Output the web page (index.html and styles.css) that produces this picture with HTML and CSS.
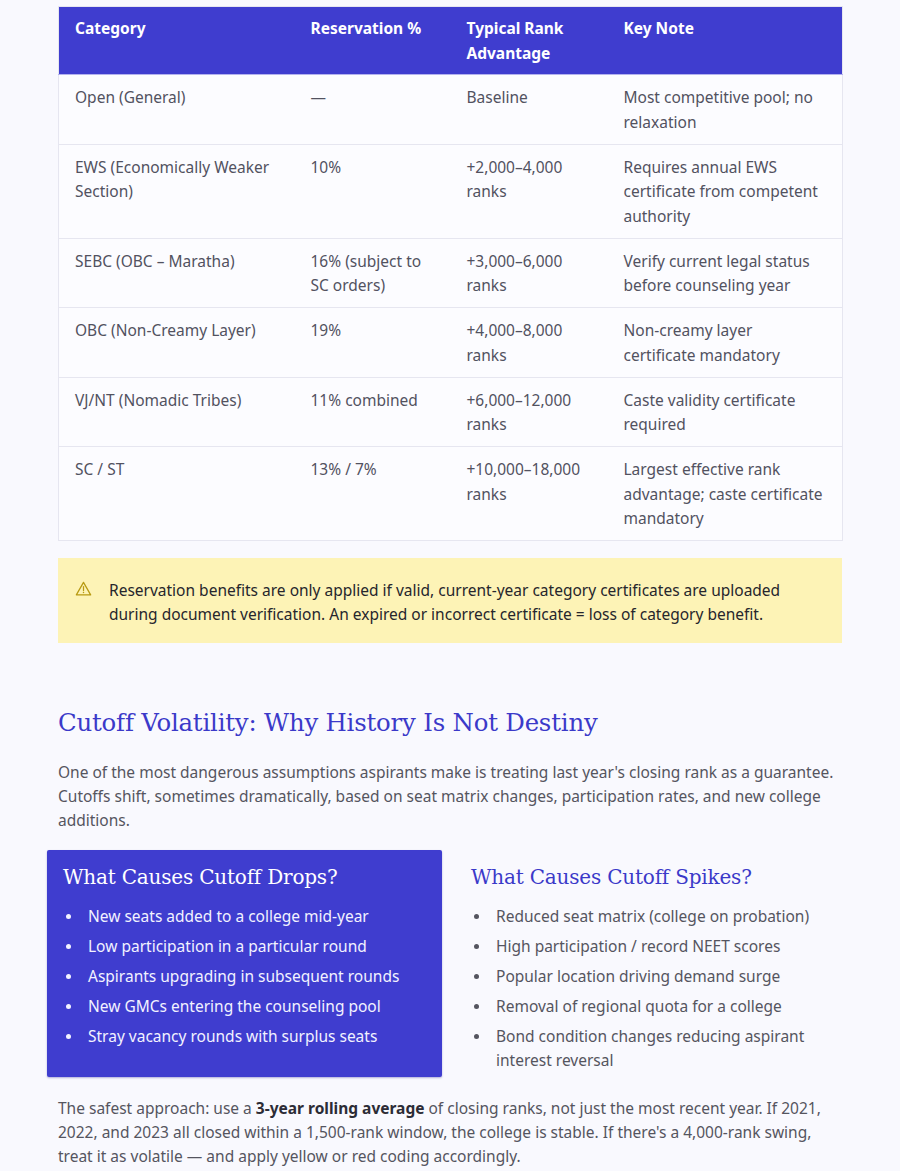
FILE: index.html
```html
<!DOCTYPE html>
<html lang="en">
<head>
<meta charset="utf-8">
<title>Category Reservation and Cutoff Volatility</title>
<link rel="stylesheet" href="styles.css">
</head>
<body>
<main class="page">
  <table class="res-table">
    <colgroup>
      <col class="c1"><col class="c2"><col class="c3"><col class="c4">
    </colgroup>
    <thead>
      <tr><th>Category</th><th>Reservation %</th><th>Typical Rank Advantage</th><th>Key Note</th></tr>
    </thead>
    <tbody>
      <tr><td>Open (General)</td><td>—</td><td>Baseline</td><td>Most competitive pool; no relaxation</td></tr>
      <tr><td>EWS (Economically Weaker Section)</td><td>10%</td><td>+2,000–4,000 ranks</td><td>Requires annual EWS certificate from competent authority</td></tr>
      <tr><td>SEBC (OBC – Maratha)</td><td>16% (subject to SC orders)</td><td>+3,000–6,000 ranks</td><td>Verify current legal status before counseling year</td></tr>
      <tr><td>OBC (Non-Creamy Layer)</td><td>19%</td><td>+4,000–8,000 ranks</td><td>Non-creamy layer certificate mandatory</td></tr>
      <tr><td>VJ/NT (Nomadic Tribes)</td><td>11% combined</td><td>+6,000–12,000 ranks</td><td>Caste validity certificate required</td></tr>
      <tr><td>SC / ST</td><td>13% / 7%</td><td>+10,000–18,000 ranks</td><td>Largest effective rank advantage; caste certificate mandatory</td></tr>
    </tbody>
  </table>

  <div class="warning">
    <svg class="warn-icon" viewBox="0 0 20 18" width="17" height="15" aria-hidden="true">
      <path d="M10 1.6 L18.6 16.6 H1.4 Z" fill="none" stroke="#b89a12" stroke-width="1.5" stroke-linejoin="round"/>
      <path d="M10 6.6 V11.4" stroke="#b89a12" stroke-width="1.5" stroke-linecap="round"/>
      <circle cx="10" cy="13.9" r="0.9" fill="#b89a12"/>
    </svg>
    <p>Reservation benefits are only applied if valid, current-year category certificates are uploaded during document verification. An expired or incorrect certificate = loss of category benefit.</p>
  </div>

  <h2 class="section-title">Cutoff Volatility: Why History Is Not Destiny</h2>
  <p class="body-text">One of the most dangerous assumptions aspirants make is treating last year's closing rank as a guarantee. Cutoffs shift, sometimes dramatically, based on seat matrix changes, participation rates, and new college additions.</p>

  <div class="compare">
    <section class="card card-filled">
      <h3>What Causes Cutoff Drops?</h3>
      <ul>
        <li>New seats added to a college mid-year</li>
        <li>Low participation in a particular round</li>
        <li>Aspirants upgrading in subsequent rounds</li>
        <li>New GMCs entering the counseling pool</li>
        <li>Stray vacancy rounds with surplus seats</li>
      </ul>
    </section>
    <section class="card card-plain">
      <h3>What Causes Cutoff Spikes?</h3>
      <ul>
        <li>Reduced seat matrix (college on probation)</li>
        <li>High participation / record NEET scores</li>
        <li>Popular location driving demand surge</li>
        <li>Removal of regional quota for a college</li>
        <li>Bond condition changes reducing aspirant interest reversal</li>
      </ul>
    </section>
  </div>

  <p class="body-text closing">The safest approach: use a <strong>3-year rolling average</strong> of closing ranks, not just the most recent year. If 2021, 2022, and 2023 all closed within a 1,500-rank window, the college is stable. If there's a 4,000-rank swing, treat it as volatile — and apply yellow or red coding accordingly.</p>
</main>
</body>
</html>
```

FILE: styles.css
```css
html, body {
  margin: 0;
  padding: 0;
  background: #f9f9fe;
}
body {
  font-family: "Noto Sans", "Open Sans", "Liberation Sans", sans-serif;
  color: #50505e;
  font-size: 15.5px;
  line-height: 24px;
}
.page {
  width: 784px;
  margin: 0 auto;
  padding: 6px 0 0;
}

/* table */
.res-table {
  width: 100%;
  border-collapse: collapse;
  table-layout: fixed;
  background: #fcfcff;
  border: 1px solid #e6e6f0;
  line-height: 24.5px;
}
.res-table .c1 { width: 236px; }
.res-table .c2 { width: 156px; }
.res-table .c3 { width: 157px; }
.res-table .c4 { width: 235px; }
.res-table th {
  background: #3f3dcf;
  color: #ffffff;
  font-weight: 700;
  text-align: left;
  vertical-align: top;
  padding: 9px 16px 9px;
  border-bottom: 1px solid #b3b2ee;
}
.res-table td {
  vertical-align: top;
  padding: 10px 16px 9.5px;
  border-bottom: 1px solid #e6e6f0;
  color: #52525f;
}

/* warning */
.warning {
  margin-top: 17px;
  background: #fdf3b6;
  display: flex;
  align-items: flex-start;
  gap: 17px;
  padding: 20px 24px 17px 17px;
}
.warn-icon {
  flex: none;
  margin-top: 3px;
}
.warning p {
  margin: 0;
  color: #26262c;
}

/* section */
.section-title {
  font-family: "DejaVu Serif", "Liberation Serif", serif;
  font-weight: 400;
  font-size: 24.4px;
  line-height: 34px;
  color: #3b39c9;
  margin: 63px 0 0;
  letter-spacing: -0.2px;
}
.body-text {
  margin: 20px 0 0;
  color: #55555f;
}

/* comparison */
.compare {
  display: grid;
  grid-template-columns: 395px 395px;
  gap: 13px;
  margin: 18px 0 0 -11px;
}
.card {
  padding: 12px 16px 5px;
}
.card-filled {
  background: #3f3dcf;
  color: #ffffff;
  border-radius: 2px;
  box-shadow: 0 1px 2px rgba(40, 38, 150, 0.35);
}
.card h3 {
  font-family: "DejaVu Serif", "Liberation Serif", serif;
  font-weight: 400;
  font-size: 20px;
  line-height: 30px;
  margin: 0 0 12px;
  letter-spacing: -0.2px;
}
.card-plain h3 {
  color: #3b39c9;
}
.card ul {
  margin: 0;
  padding: 0;
  list-style: none;
}
.card li {
  display: flex;
  align-items: flex-start;
  margin-bottom: 6px;
}
.card li:last-child {
  margin-bottom: 0;
}
.card li::before {
  content: "";
  flex: none;
  width: 5px;
  height: 5px;
  border-radius: 50%;
  background: currentColor;
  margin: 10px 17px 0 3px;
}
.card-filled li { color: #f2f2ff; }
.card-plain li { color: #55555f; }

.closing {
  margin-top: 19px;
  padding-bottom: 10px;
}
.closing strong {
  color: #2c2c36;
}
```
